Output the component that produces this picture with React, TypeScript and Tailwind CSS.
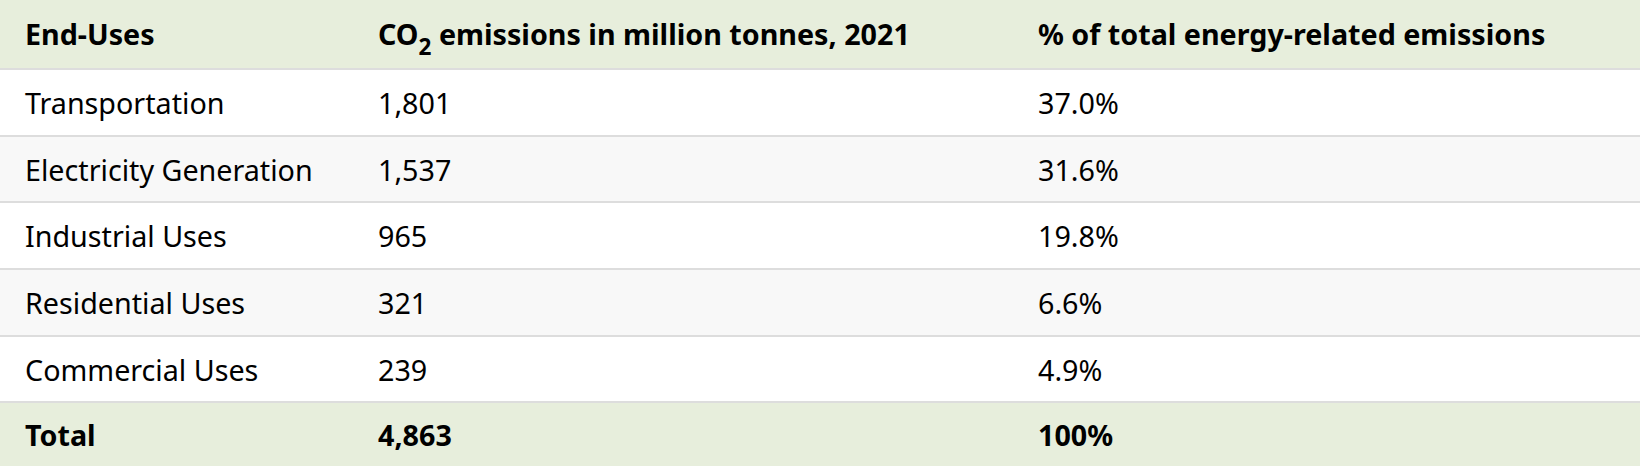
const rows = [
  { use: "Transportation", amount: "1,801", share: "37.0%" },
  { use: "Electricity Generation", amount: "1,537", share: "31.6%" },
  { use: "Industrial Uses", amount: "965", share: "19.8%" },
  { use: "Residential Uses", amount: "321", share: "6.6%" },
  { use: "Commercial Uses", amount: "239", share: "4.9%" },
]

export default function App() {
  return (
    <div className="w-[1640px] h-[472px] bg-white text-black font-['Noto_Sans',sans-serif] text-[28.7px]">
      <table className="w-full border-collapse">
        <thead>
          <tr className="bg-[#e7eedc] h-[69px] border-b-2 border-[#dddddd]">
            <th className="w-[354px] pl-[25px] text-left font-bold">End-Uses</th>
            <th className="w-[660px] pl-[24px] text-left font-bold">
              CO<sub className="text-[22.5px] top-[10px]">2</sub> emissions in million tonnes, 2021
            </th>
            <th className="pl-[24px] text-left font-bold">% of total energy-related emissions</th>
          </tr>
        </thead>
        <tbody>
          {rows.map((r, i) => (
            <tr
              key={r.use}
              className={`h-[66.7px] border-b-2 border-[#dddddd] ${i % 2 === 1 ? "bg-[#f8f8f8]" : "bg-white"}`}
            >
              <td className="pl-[25px]">{r.use}</td>
              <td className="pl-[24px]">{r.amount}</td>
              <td className="pl-[24px]">{r.share}</td>
            </tr>
          ))}
          <tr className="bg-[#e7eedc] h-[64px] font-bold">
            <td className="pl-[25px]">Total</td>
            <td className="pl-[24px]">4,863</td>
            <td className="pl-[24px]">100%</td>
          </tr>
        </tbody>
      </table>
    </div>
  )
}
